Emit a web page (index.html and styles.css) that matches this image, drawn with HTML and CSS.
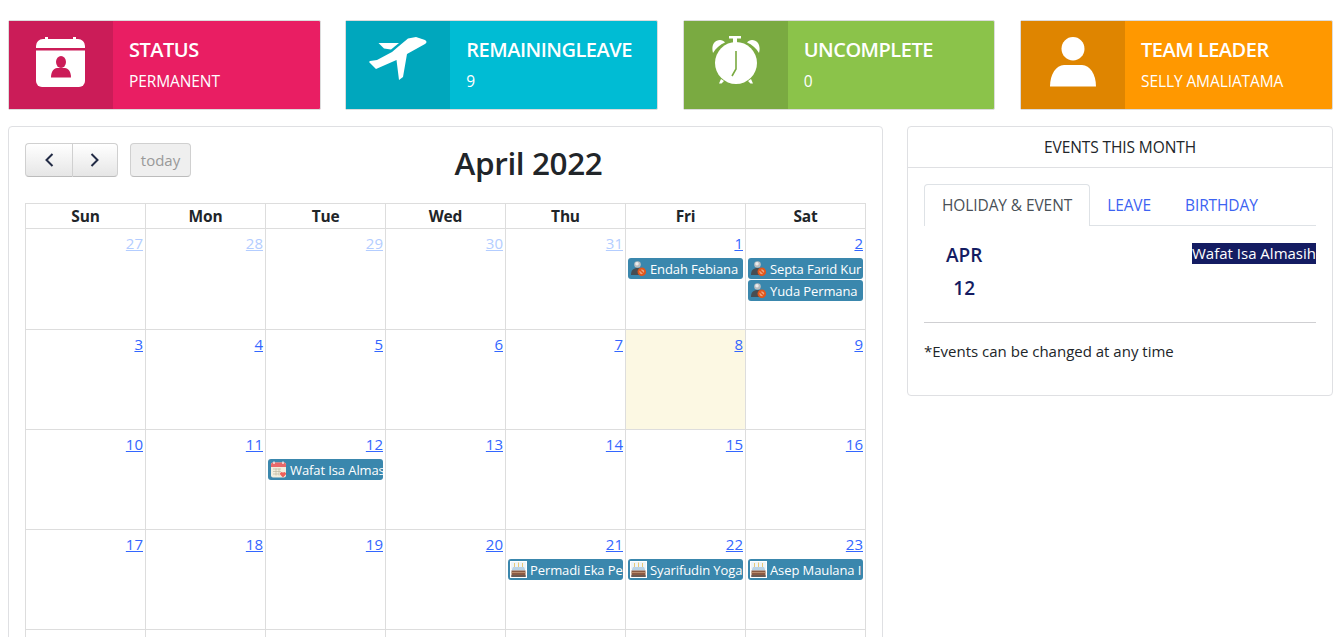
FILE: index.html
```html
<!DOCTYPE html>
<html>
<head>
  <title>Dashboard</title>
  <link rel="stylesheet" href="styles.css">
</head>
<body>
<svg class="defs" width="0" height="0">
  <symbol id="ev-leave" viewBox="0 0 17 17">
    <circle cx="7.500" cy="4.500" r="3.300" fill="#b9bdc0"/>
    <circle cx="7" cy="3.800" r="1.700" fill="#eceded"/>
    <path d="M1 15c0-5 2.500-7 6.500-7s5.500 2 6 4v3z" fill="#474d52"/>
    <circle cx="11.800" cy="11.800" r="4.300" fill="#e0561c"/>
    <circle cx="11.800" cy="11.800" r="2.400" fill="#f0a67c"/>
    <path d="M9.500 9.500l4.600 4.600" stroke="#e0561c" stroke-width="1.400"/>
  </symbol>
  <symbol id="ev-holiday" viewBox="0 0 17 17">
    <rect x="1" y="1.500" width="15" height="15" rx="2" fill="#f2efdf"/>
    <path d="M1 3.500a2 2 0 0 1 2-2h11a2 2 0 0 1 2 2v2.500H1z" fill="#e8686a"/>
    <path d="M4 .5v2.500M13 .5v2.500" stroke="#fff" stroke-width="1.200"/>
    <path d="M3 8h8M3 10.500h8M3 13h6M6 7.500v7M9 7.500v7" stroke="#bdb9a2" stroke-width=".7"/>
    <path d="M13 16.500l-2.700-2.700a1.600 1.600 0 0 1 2.700-2 1.600 1.600 0 0 1 2.700 2z" fill="#ef5f5a"/>
  </symbol>
  <symbol id="ev-birthday" viewBox="0 0 17 17">
    <rect width="17" height="17" fill="#fff"/>
    <path d="M1 1h15v7H1z" fill="#eef4f9"/>
    <path d="M4.500 2v4M8.500 1.500V6M12.500 2v4" stroke="#e8c877" stroke-width="1"/>
    <path d="M3 6h11l1.500 3.500h-14z" fill="#b9d2e6"/>
    <rect x="1.500" y="9.500" width="14" height="4.500" fill="#8a5a44"/>
    <rect x="1.500" y="11" width="14" height=".8" fill="#c69c7c"/>
    <rect x="1" y="14" width="15" height="2" rx="1" fill="#6a5a54"/>
  </symbol>
</svg>

<div class="page">
  <div class="stats">
    <div class="stat stat-pink">
      <div class="stat-icon">
        <svg width="50" height="50" viewBox="1 0 50 50">
          <path d="M10 0h3v2h25V0h3v2h2a7 7 0 0 1 7 7v2H1V9a7 7 0 0 1 7-7h2z" fill="#fff"/>
          <path d="M1 13.500h49V44a6 6 0 0 1-6 6H7a6 6 0 0 1-6-6z" fill="#fff"/>
          <ellipse cx="26" cy="25" rx="5" ry="6" fill="#cb1c58"/>
          <path d="M16 40.500c0-6 3-9.500 6-9.500h8c3 0 6 3.500 6 9.500z" fill="#cb1c58"/>
        </svg>
      </div>
      <div class="stat-text">
        <div class="stat-title">STATUS</div>
        <div class="stat-value">PERMANENT</div>
      </div>
    </div>
    <div class="stat stat-cyan">
      <div class="stat-icon">
        <svg width="58" height="43" viewBox="0 0 58 43">
          <path d="M47 0l9 3c2 1 2 3 0 4L38 17l-4 23-4 3-2.500-20L7 32l-7-7 1-1 7-1 15-8 7-6 9-7.500z" fill="#fff"/>
          <path d="M9.500 6H30l-8 6.500-7-1z" fill="#fff"/>
        </svg>
      </div>
      <div class="stat-text">
        <div class="stat-title">REMAININGLEAVE</div>
        <div class="stat-value">9</div>
      </div>
    </div>
    <div class="stat stat-green">
      <div class="stat-icon">
        <svg class="clock-icon" width="48" height="50" viewBox="0 0 48 50">
          <path d="M17 0h12v2.500h-4V7h-4V2.500h-4z" fill="#fff"/>
          <path d="M1 17C-1 10 2 4 8 4c2 0 4 1 5 2.500C8 8.500 4 12 1 17zM47 17c2-7-1-13-7-13-2 0-4 1-5 2.500C40 8.500 44 12 47 17z" fill="#fff"/>
          <ellipse cx="24" cy="27" rx="21" ry="21" fill="#fff"/>
          <path d="M9 43l-2 4.500h2.500L12 45zM39 43l2 4.500h-2.500L36 45z" fill="#fff"/>
          <path d="M24 15v18l-4 7" fill="none" stroke="#7aaa41" stroke-width="1.600"/>
        </svg>
      </div>
      <div class="stat-text">
        <div class="stat-title">UNCOMPLETE</div>
        <div class="stat-value">0</div>
      </div>
    </div>
    <div class="stat stat-orange">
      <div class="stat-icon">
        <svg width="46" height="50" viewBox="0 0 46 50">
          <ellipse cx="23" cy="11.700" rx="11.500" ry="11.700" fill="#fff"/>
          <path d="M0 49.500c0-12 6-21.500 14-21.500h18c8 0 14 9.500 14 21.500z" fill="#fff"/>
        </svg>
      </div>
      <div class="stat-text">
        <div class="stat-title">TEAM LEADER</div>
        <div class="stat-value">SELLY AMALIATAMA</div>
      </div>
    </div>
  </div>

  <div class="content">
    <div class="card calendar">
      <div class="cal-toolbar">
        <div class="cal-buttons">
          <div class="btn-group">
            <span class="btn btn-nav">
              <svg width="12" height="16" viewBox="0 0 12 16"><path d="M9.500 2L3.500 8l6 6" fill="none" stroke="#222b45" stroke-width="2"/></svg>
            </span>
            <span class="btn btn-nav">
              <svg width="12" height="16" viewBox="0 0 12 16"><path d="M2.500 2l6 6-6 6" fill="none" stroke="#222b45" stroke-width="2"/></svg>
            </span>
          </div>
          <span class="btn btn-today">today</span>
        </div>
        <h2 class="cal-title">April 2022</h2>
      </div>

      <table class="cal-table">
        <thead>
          <tr><th>Sun</th><th>Mon</th><th>Tue</th><th>Wed</th><th>Thu</th><th>Fri</th><th>Sat</th></tr>
        </thead>
        <tbody>
          <tr class="first-week">
            <td><a class="day other" href="#">27</a></td>
            <td><a class="day other" href="#">28</a></td>
            <td><a class="day other" href="#">29</a></td>
            <td><a class="day other" href="#">30</a></td>
            <td><a class="day other" href="#">31</a></td>
            <td><a class="day" href="#">1</a>
              <div class="event"><svg class="ev-icon"><use href="#ev-leave"/></svg>Endah Febiana</div>
            </td>
            <td><a class="day" href="#">2</a>
              <div class="event"><svg class="ev-icon"><use href="#ev-leave"/></svg>Septa Farid Kur</div>
              <div class="event"><svg class="ev-icon"><use href="#ev-leave"/></svg>Yuda Permana</div>
            </td>
          </tr>
          <tr>
            <td><a class="day" href="#">3</a></td>
            <td><a class="day" href="#">4</a></td>
            <td><a class="day" href="#">5</a></td>
            <td><a class="day" href="#">6</a></td>
            <td><a class="day" href="#">7</a></td>
            <td class="today"><a class="day" href="#">8</a></td>
            <td><a class="day" href="#">9</a></td>
          </tr>
          <tr>
            <td><a class="day" href="#">10</a></td>
            <td><a class="day" href="#">11</a></td>
            <td><a class="day" href="#">12</a>
              <div class="event"><svg class="ev-icon"><use href="#ev-holiday"/></svg>Wafat Isa Almasih</div>
            </td>
            <td><a class="day" href="#">13</a></td>
            <td><a class="day" href="#">14</a></td>
            <td><a class="day" href="#">15</a></td>
            <td><a class="day" href="#">16</a></td>
          </tr>
          <tr>
            <td><a class="day" href="#">17</a></td>
            <td><a class="day" href="#">18</a></td>
            <td><a class="day" href="#">19</a></td>
            <td><a class="day" href="#">20</a></td>
            <td><a class="day" href="#">21</a>
              <div class="event"><svg class="ev-icon"><use href="#ev-birthday"/></svg>Permadi Eka Pe</div>
            </td>
            <td><a class="day" href="#">22</a>
              <div class="event"><svg class="ev-icon"><use href="#ev-birthday"/></svg>Syarifudin Yoga</div>
            </td>
            <td><a class="day" href="#">23</a>
              <div class="event"><svg class="ev-icon"><use href="#ev-birthday"/></svg>Asep Maulana I</div>
            </td>
          </tr>
        </tbody>
      </table>
      <div class="cal-next-row"></div>
    </div>

    <div class="card events">
      <div class="events-header">EVENTS THIS MONTH</div>
      <div class="events-body">
        <ul class="tabs">
          <li class="tab active">HOLIDAY &amp; EVENT</li>
          <li class="tab">LEAVE</li>
          <li class="tab">BIRTHDAY</li>
        </ul>
        <div class="event-row">
          <div class="event-date">
            <div>APR</div>
            <div>12</div>
          </div>
          <span class="event-name">Wafat Isa Almasih</span>
        </div>
        <hr class="divider">
        <p class="note">*Events can be changed at any time</p>
      </div>
    </div>
  </div>
</div>
</body>
</html>
```

FILE: styles.css
```css
html, body {
  margin: 0;
  height: 100%;
  overflow: hidden;
}
body {
  background: #fff;
  color: #212529;
  font-family: "Open Sans", "Noto Sans", sans-serif;
  font-size: 15px;
}
.defs {
  position: absolute;
}
.page {
  padding: 20px 8px 0 8px;
  width: 1325px;
}

/* top boxes */
.stats {
  display: grid;
  grid-template-columns: repeat(4, 312.800px);
  column-gap: 24.550px;
  margin-bottom: 16px;
}
.stat {
  display: flex;
  height: 88px;
  border: 1px solid #dcdcdc;
  border-radius: 2px;
  color: #fff;
}
.stat-icon {
  width: 104px;
  padding-top: 16px;
  display: flex;
  align-items: flex-start;
  justify-content: center;
  flex-shrink: 0;
}
.clock-icon {
  margin-top: -1px;
}
.stat-text {
  padding: 15px 0 0 16px;
}
.stat-title {
  font-size: 20px;
  font-weight: 600;
  line-height: 28px;
  letter-spacing: -0.5px;
}
.stat-value {
  font-size: 15.500px;
  line-height: 20px;
  margin-top: 7px;
  letter-spacing: -0.1px;
}
.stat-pink { background: #e91e63; }
.stat-pink .stat-icon { background: #cb1c58; }
.stat-cyan { background: #00bcd4; }
.stat-cyan .stat-icon { background: #00a7bd; }
.stat-green { background: #8bc34a; }
.stat-green .stat-icon { background: #7aaa41; }
.stat-orange { background: #ff9800; }
.stat-orange .stat-icon { background: #df8500; }

.content {
  display: grid;
  grid-template-columns: 875px 426px;
  column-gap: 24px;
  align-items: start;
}
.card {
  background: #fff;
  border: 1px solid #dfe0e3;
  border-radius: 4px;
}

/* calendar */
.calendar {
  padding: 16px;
}
.cal-toolbar {
  display: flex;
  align-items: center;
  height: 34px;
  margin-bottom: 26px;
}
.cal-buttons {
  display: flex;
  gap: 12px;
}
.btn-group {
  display: flex;
}
.btn {
  box-sizing: border-box;
  height: 34px;
  display: flex;
  align-items: center;
  justify-content: center;
  border: 1px solid #d0d0d0;
  border-bottom-color: #bcbcbc;
  border-radius: 4px;
}
.btn-nav {
  width: 46.500px;
  background: linear-gradient(#fff, #e6e6e6);
}
.btn-nav:first-child {
  border-radius: 4px 0 0 4px;
  border-right: 0;
}
.btn-nav:last-child {
  border-radius: 0 4px 4px 0;
}
.btn-today {
  width: 61px;
  background: #efefef;
  color: #999;
  font-size: 15px;
}
.cal-title {
  flex: 1;
  margin: 0;
  padding-top: 4px;
  text-align: center;
  font-size: 31.500px;
  font-weight: 600;
  letter-spacing: -0.4px;
}
.cal-table {
  border-collapse: collapse;
  table-layout: fixed;
  width: 841px;
}
.cal-table th,
.cal-table td {
  border: 1px solid #ddd;
  padding: 0;
}
.cal-table th {
  height: 24px;
  font-size: 15.500px;
  font-weight: 700;
  letter-spacing: -0.2px;
}
.cal-table td {
  height: 99px;
  vertical-align: top;
  text-align: right;
}
.first-week td {
  height: 100px;
}
.cal-table td.today {
  background: #fcf8e3;
}
.cal-next-row {
  height: 100px;
  width: 841px;
  background: repeating-linear-gradient(to right, #ddd 0, #ddd 1px, transparent 1px, transparent 120px);
}
.day {
  display: block;
  height: 29px;
  line-height: 28px;
  padding-right: 2px;
  color: #3366ff;
  font-size: 15px;
}
.day.other {
  color: #b3cdff;
}
.event {
  display: flex;
  align-items: center;
  height: 21px;
  margin: 0 2px 1px 2px;
  background: #3a87ad;
  border-radius: 3px;
  color: #fff;
  font-size: 13px;
  letter-spacing: -0.1px;
  text-align: left;
  white-space: nowrap;
  overflow: hidden;
}
.ev-icon {
  width: 17px;
  height: 17px;
  flex-shrink: 0;
  margin: 0 3px 0 2px;
}

/* right card */
.events-header {
  height: 40px;
  line-height: 41px;
  text-align: center;
  font-size: 15.500px;
  letter-spacing: -0.1px;
  border-bottom: 1px solid #dfe0e3;
}
.events-body {
  padding: 16px;
}
.tabs {
  display: flex;
  list-style: none;
  margin: 0;
  padding: 0;
  height: 41px;
  border-bottom: 1px solid #dee2e6;
}
.tab {
  padding: 0 17px;
  line-height: 43px;
  font-size: 15.500px;
  letter-spacing: -0.1px;
  color: #3d63f2;
}
.tab.active {
  height: 42px;
  line-height: 41px;
  color: #495057;
  background: #fff;
  border: 1px solid #dee2e6;
  border-bottom: 0;
  border-radius: 4px 4px 0 0;
  box-sizing: border-box;
}
.event-row {
  display: flex;
  justify-content: space-between;
  align-items: flex-start;
  padding: 13px 0 0 22px;
}
.event-date {
  text-align: center;
  color: #141c62;
  font-size: 19px;
  font-weight: 600;
  line-height: 33px;
}
.event-name {
  margin-top: 4px;
  background: #141c62;
  color: #fff;
  font-size: 15px;
  line-height: 21px;
}
.divider {
  border: 0;
  border-top: 1px solid #cfcfd2;
  margin: 17px 0 18px 0;
}
.note {
  margin: 0 0 18px 0;
  font-size: 15px;
  line-height: 20px;
}
```
